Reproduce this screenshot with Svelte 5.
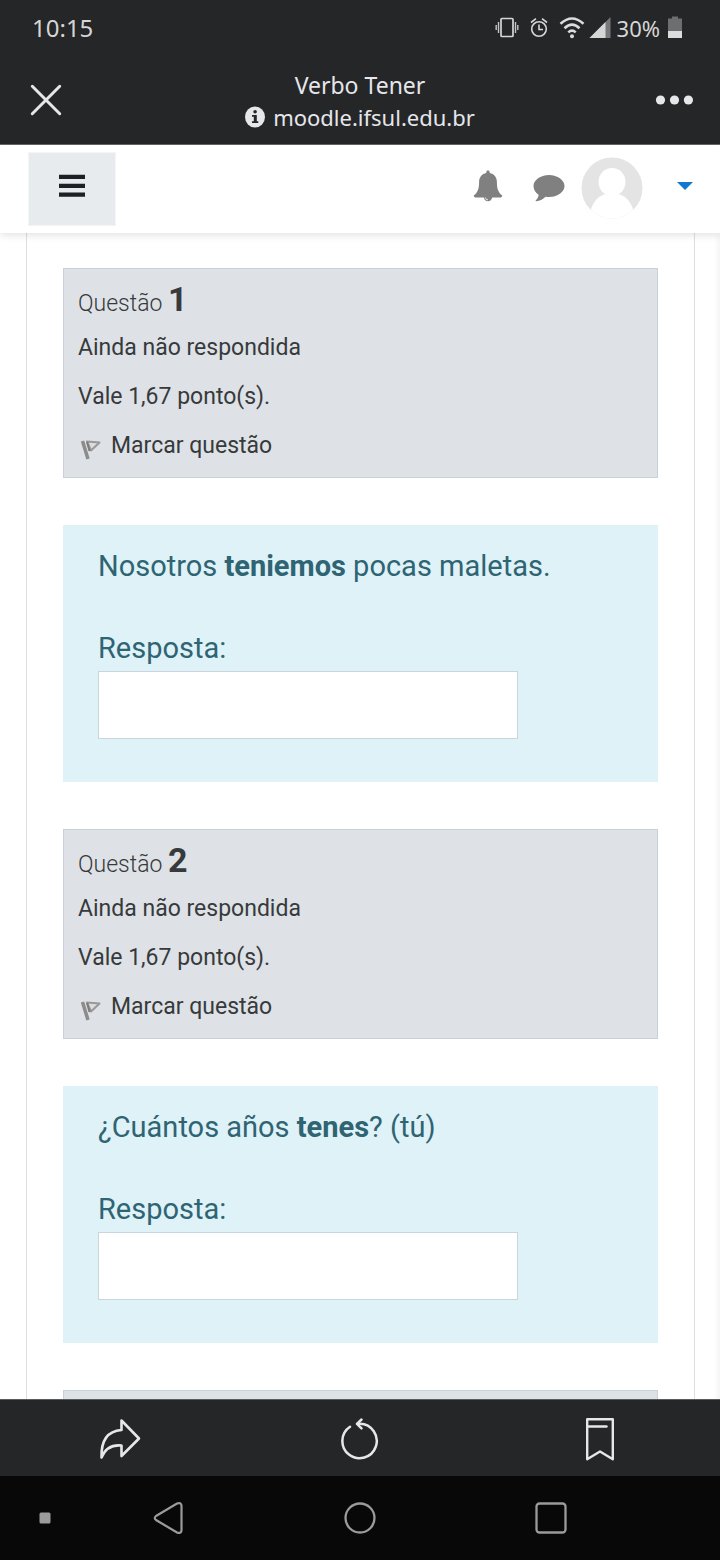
<script lang="ts">
    type Question = { number: number; before: string; wrong: string; after: string };

    const questions: Question[] = [
        { number: 1, before: 'Nosotros ', wrong: 'teniemos', after: ' pocas maletas.' },
        { number: 2, before: '¿Cuántos años ', wrong: 'tenes', after: '? (tú)' },
    ];

    let answers = $state(['', '']);
</script>

<div class="screen">
    <div class="status-bar">
        <span>10:15</span>
        <div class="status-icons">
            <svg class="vibrate" width="24" height="24" viewBox="0 0 24 24">
                <rect x="6" y="2.5" width="12" height="18" rx="1" fill="none" stroke="#d6d6d6" stroke-width="1.7" />
                <path d="M3.5 6v11M20.5 6v11M1.2 9v5M22.8 9v5" stroke="#c4c4c4" stroke-width="1.4" />
            </svg>
            <svg class="alarm" width="20" height="24" viewBox="0 0 20 24">
                <circle cx="10" cy="13" r="7.3" fill="none" stroke="#d6d6d6" stroke-width="1.6" />
                <path d="M10 8.5v5h4M2 6.5l5-3.8M18 6.5l-5-3.8" fill="none" stroke="#d6d6d6" stroke-width="1.6" />
            </svg>
            <svg class="wifi" width="26" height="24" viewBox="0 0 26 24">
                <g fill="none" stroke="#dcdcdc" stroke-width="2.6">
                    <path d="M1.5 7.8Q13-2.8 24.5 7.8" />
                    <path d="M5.5 12.2Q13 5.2 20.5 12.2" />
                    <path d="M9.3 16.4Q13 13 16.7 16.4" />
                </g>
                <circle cx="13" cy="20.3" r="2" fill="#dcdcdc" />
            </svg>
            <svg class="signal" width="22" height="24" viewBox="0 0 22 24">
                <path d="M21.5 1v21H0.5z" fill="#77787a" />
                <path d="M16.5 6v16H0.5z" fill="#d6d6d6" />
            </svg>
            <span class="charge">30%</span>
            <svg class="battery" width="14" height="24" viewBox="0 0 14 24">
                <path d="M4 0.5h6v2h4v19.5H0V2.5h4z" fill="#6d6e70" />
                <path d="M0 15h14v7H0z" fill="#dcdcdc" />
            </svg>
        </div>
    </div>

    <header class="browser-bar">
        <button aria-label="Fechar">
            <svg width="32" height="32" viewBox="0 0 32 32">
                <path d="M2.3 2.3l27.4 27.4M29.7 2.3L2.3 29.7" stroke="#e6e7eb" stroke-width="3" stroke-linecap="round" />
            </svg>
        </button>
        <div class="page-title">
            <div>Verbo Tener</div>
            <div class="address">
                <svg width="20" height="22" viewBox="0 0 20 22">
                    <ellipse cx="10" cy="11" rx="10" ry="10.5" fill="#e6e7eb" />
                    <path d="M7 9h4.800v6.200h1.500v1.800H7v-1.800h1.800v-4.400H7z" fill="#252628" />
                    <circle cx="10.100" cy="5.800" r="1.800" fill="#252628" />
                </svg>
                <span>moodle.ifsul.edu.br</span>
            </div>
        </div>
        <button class="more" aria-label="Mais opções">
            <svg width="38" height="10" viewBox="0 0 38 10">
                <g fill="#e6e7eb">
                    <circle cx="5.5" cy="5" r="4.6" />
                    <circle cx="19.5" cy="5" r="4.6" />
                    <circle cx="33.4" cy="5" r="4.6" />
                </g>
            </svg>
        </button>
    </header>

    <nav class="moodle-nav">
        <button class="drawer-toggle" aria-label="Painel lateral">
            <svg width="28" height="24" viewBox="0 0 28 24">
                <path d="M1 2.900h26M1 11.900h26M1 20.600h26" stroke="#1d2125" stroke-width="4.2" />
            </svg>
        </button>
        <div class="user-tools">
            <button class="notifications" aria-label="Notificações">
                <svg width="30" height="32" viewBox="0 0 30 32">
                    <path
                        d="M15 .5c1 0 1.7.7 1.7 1.6v.8c4.5.8 7.2 4.5 7.2 9 0 7.2 1.5 10.5 5.4 13.7 0 1-.8 1.9-1.8 1.9H2.500c-1 0-1.800-.9-1.800-1.900C4.600 22.400 6.100 19.100 6.100 11.900c0-4.500 2.700-8.200 7.200-9v-.8C13.300 1.200 14 .5 15 .5z"
                        fill="#808080"
                    />
                    <path d="M10.800 27a4.200 4.200 0 0 0 8.400 0z" fill="#808080" />
                    <path d="M12.300 27.500a2.800 2.800 0 0 0 2.700 2.400" fill="none" stroke="#fff" stroke-width="0.8" />
                </svg>
            </button>
            <button class="messages" aria-label="Mensagens">
                <svg width="32" height="28" viewBox="0 0 32 28">
                    <path
                        d="M16 1c8.600 0 15.500 5 15.500 11S24.600 23 16 23c-1.200 0-2.300-.1-3.400-.3C9.800 25.500 6.500 27 3.200 27.200c-.6 0-.7-.6-.3-1 1.600-1.600 2.500-3 2.700-5.500C2.500 18.700.5 15.500.5 12 .5 6 7.400 1 16 1z"
                        fill="#808080"
                    />
                </svg>
            </button>
            <button class="user-menu" aria-label="Menu do usuário">
                <svg width="62" height="62" viewBox="0 0 62 62">
                    <defs>
                        <clipPath id="avatar"><circle cx="31" cy="31" r="30.5" /></clipPath>
                    </defs>
                    <g clip-path="url(#avatar)">
                        <rect width="62" height="62" fill="#e4e4e4" />
                        <ellipse cx="31" cy="25" rx="13.5" ry="14" fill="#fff" />
                        <path d="M8 62v-3C11 46 16 39 25 37h12c9 2 14 9 17 22v3z" fill="#fff" />
                    </g>
                </svg>
                <span class="caret"></span>
            </button>
        </div>
    </nav>

    <main>
        <form class="quiz">
            {#each questions as question, index}
                <section class="info">
                    <h3>Questão <strong>{question.number}</strong></h3>
                    <div>Ainda não respondida</div>
                    <div>Vale 1,67 ponto(s).</div>
                    <a class="flag" href="#flag">
                        <svg width="23" height="28" viewBox="0 0 23 28">
                            <path d="M9 9.500l12.500 1-8.500 8z" fill="#dcdcdc" stroke="#989898" stroke-width="2" stroke-linejoin="round" />
                            <path d="M4.500 9l5.500 18" stroke="#8c8c8c" stroke-width="3.5" />
                            <path d="M9 10l2.500 9" stroke="#7c7c7c" stroke-width="2" />
                        </svg>
                        <span>Marcar questão</span>
                    </a>
                </section>
                <section class="formulation">
                    <p>{question.before}<strong>{question.wrong}</strong>{question.after}</p>
                    <label for="answer-{question.number}">Resposta:</label>
                    <input id="answer-{question.number}" type="text" bind:value={answers[index]} />
                </section>
            {/each}
            <section class="info next"></section>
        </form>
    </main>

    <footer class="toolbar">
        <button aria-label="Compartilhar">
            <svg width="42" height="42" viewBox="0 0 42 42">
                <path
                    d="M22.500 2.500L40 20.500 22.500 38V27.500C13 26.500 6 31 2.500 39.500 2 23 8.500 13 22.500 12z"
                    fill="none"
                    stroke="#e6e7eb"
                    stroke-width="2.6"
                    stroke-linejoin="round"
                />
            </svg>
        </button>
        <button aria-label="Recarregar">
            <svg width="42" height="42" viewBox="0 0 42 42">
                <g fill="none" stroke="#e6e7eb" stroke-width="2.5" stroke-linecap="round" stroke-linejoin="round">
                    <path d="M11 8.700A17.200 17.200 0 1 0 21 5.800H18.500" />
                    <path d="M22.500 1.500L18 5.800l4.500 4.500" />
                </g>
            </svg>
        </button>
        <button aria-label="Favoritos">
            <svg width="42" height="44" viewBox="0 0 42 44">
                <g fill="none" stroke="#e6e7eb" stroke-width="2.4" stroke-linecap="round" stroke-linejoin="round">
                    <path d="M8.200 2.200h25.600v40L21 34.500 8.200 42.200z" />
                    <path d="M9 9.500h18.500" />
                </g>
            </svg>
        </button>
    </footer>

    <nav class="system-nav">
        <button aria-label="Fixar">
            <svg width="12" height="12" viewBox="0 0 12 12"><rect x="0.5" y="0.5" width="11" height="11" rx="1.5" fill="#9b9b9b" /></svg>
        </button>
        <button aria-label="Voltar">
            <svg width="32" height="34" viewBox="0 0 32 34">
                <path
                    d="M4 15L25 2.500q4-1.500 4.500 2v25q-.5 3.500-4.500 2L4 19q-2.500-2 0-4z"
                    fill="none"
                    stroke="#9b9b9b"
                    stroke-width="2.2"
                />
            </svg>
        </button>
        <button aria-label="Início">
            <svg width="34" height="34" viewBox="0 0 34 34"><circle cx="17" cy="17" r="14.5" fill="none" stroke="#9b9b9b" stroke-width="2.3" /></svg>
        </button>
        <button aria-label="Recentes">
            <svg width="34" height="34" viewBox="0 0 34 34">
                <rect x="2.5" y="2.5" width="29" height="29" rx="3" fill="none" stroke="#9b9b9b" stroke-width="2.3" />
            </svg>
        </button>
    </nav>
</div>

<style>
    :global(body) {
        margin: 0;
        background: #fff;
    }

    .screen {
        display: flex;
        flex-direction: column;
        min-height: 100vh;
        font-family: Roboto, sans-serif;
        color: #373a3c;
    }

    button {
        display: flex;
        align-items: center;
        justify-content: center;
        padding: 0;
        border: none;
        background: none;
        cursor: pointer;
    }

    svg {
        display: block;
        flex: none;
    }

    .status-bar {
        display: flex;
        align-items: center;
        justify-content: space-between;
        height: 56px;
        padding: 0 38px 0 32px;
        background: #252628;
        color: #d6d6d6;
        font: 24px/32px 'Noto Sans', sans-serif;
    }

    .status-icons {
        display: flex;
        align-items: center;
    }

    .alarm {
        margin-left: 10px;
    }

    .wifi {
        margin-left: 10px;
    }

    .signal {
        margin: 0 6px 0 4px;
    }

    .charge {
        font-size: 22px;
    }

    .battery {
        margin-left: 8px;
    }

    .browser-bar {
        display: grid;
        grid-template-columns: 92px 1fr 92px;
        align-items: center;
        height: 88px;
        border-bottom: 1px solid #66676a;
        background: #252628;
        color: #e6e7eb;
        font: 23px/32px 'Noto Sans', sans-serif;
        text-align: center;
    }

    .page-title {
        padding-top: 2px;
    }

    .address {
        display: flex;
        align-items: center;
        justify-content: center;
        gap: 8px;
        font-size: 22px;
    }

    .moodle-nav {
        position: relative;
        display: flex;
        justify-content: space-between;
        height: 88px;
        padding: 0 27px 0 28px;
        box-sizing: border-box;
        background: #fff;
        box-shadow: 0 2px 8px rgba(0, 0, 0, 0.12);
    }

    .drawer-toggle {
        width: 88px;
        height: 74px;
        margin-top: 7px;
        padding-bottom: 6px;
        border: 1px solid #f3f5f6;
        background: #e7ebee;
    }

    .user-tools {
        display: flex;
        align-items: center;
        padding-bottom: 2px;
    }

    .notifications {
        padding-bottom: 4px;
    }

    .messages {
        margin: 0 16px 0 30px;
    }

    .user-menu {
        gap: 34px;
    }

    .caret {
        margin-bottom: 4px;
        border: 8px solid transparent;
        border-top-color: #1177d1;
        border-bottom: none;
    }

    main {
        display: flex;
        flex: 1;
        padding: 0 25px 0 26px;
        background: linear-gradient(to left, #f5f5f5, #fff 6px);
    }

    .quiz {
        display: flex;
        flex: 1;
        flex-direction: column;
        padding: 35px 36px 0;
        border: 1px solid #dedede;
        border-width: 0 1px;
    }

    .info {
        display: flex;
        flex-direction: column;
        gap: 14px;
        padding: 13px 14px 14px;
        border: 1px solid #cad0d7;
        background: #dee2e6;
        font-size: 23px;
        line-height: 35px;
    }

    .info.next {
        flex: 1;
        min-height: 8px;
        padding: 0;
        border-bottom: none;
    }

    h3 {
        margin: 0 0 -8px;
        font-size: 23px;
        font-weight: 300;
        line-height: 40px;
    }

    h3 strong {
        font-size: 34px;
        font-weight: 700;
        line-height: 1;
    }

    .flag {
        display: flex;
        align-items: center;
        gap: 10px;
        color: inherit;
        text-decoration: none;
    }

    .formulation {
        display: flex;
        flex-direction: column;
        margin: 47px 0;
        padding: 19px 35px 43px;
        background: #def2f8;
        color: #2f6473;
        font-size: 29px;
        line-height: 45px;
    }

    .formulation p {
        margin: 0 0 37px;
    }

    input {
        width: 80%;
        height: 68px;
        padding: 0 12px;
        box-sizing: border-box;
        border: 1px solid #cad5dd;
        border-radius: 0;
        background: #fff;
        color: #495057;
        font: inherit;
    }

    .toolbar {
        display: grid;
        grid-template-columns: repeat(3, 1fr);
        height: 76px;
        border-top: 1px solid #565d5e;
        background: #252628;
    }

    .toolbar button {
        padding-top: 2px;
    }

    .system-nav {
        display: grid;
        grid-template-columns: 90fr 156fr 228fr 154fr 92fr;
        height: 84px;
        background: #080808;
    }
</style>
